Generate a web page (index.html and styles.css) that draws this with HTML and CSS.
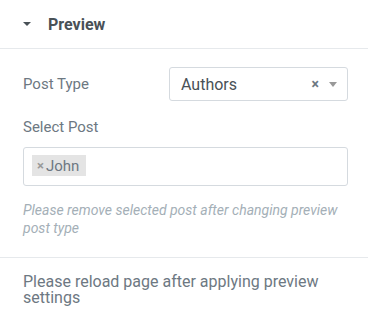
FILE: index.html
```html
<!DOCTYPE html>
<html lang="en">
<head>
  <meta charset="UTF-8" />
  <title>Preview Settings</title>
  <link rel="stylesheet" href="styles.css">
</head>
<body>
  <div class="panel">
    <div class="section-head">
      <span class="caret"></span>
      <span class="section-title">Preview</span>
    </div>

    <div class="section-body">
      <div class="control inline">
        <label class="control-label">Post Type</label>
        <div class="select">
          <span class="select-value">Authors</span>
          <span class="select-clear">×</span>
          <span class="select-arrow"></span>
        </div>
      </div>

      <div class="control">
        <label class="control-label">Select Post</label>
        <div class="multi">
          <span class="tag"><span class="tag-remove">×</span>John</span>
        </div>
        <div class="help">Please remove selected post after changing preview post type</div>
      </div>
    </div>

    <div class="note">Please reload page after applying preview settings</div>
  </div>
</body>
</html>
```

FILE: styles.css
```css
body {
  margin: 0;
  background-color: #ffffff;
  font-family: Roboto, "Liberation Sans", sans-serif;
  color: #6d7882;
}
.panel {
  width: 368px;
}
.section-head {
  display: flex;
  align-items: center;
  height: 48px;
  padding-left: 23px;
  border-bottom: 1px solid #e6e9ec;
}
.caret {
  width: 0;
  height: 0;
  border-left: 4px solid transparent;
  border-right: 4px solid transparent;
  border-top: 4px solid #495157;
  margin-right: 17px;
}
.section-title {
  font-size: 16px;
  font-weight: bold;
  color: #495157;
}
.section-body {
  padding: 18px 20px 20px 23px;
  border-bottom: 1px solid #e6e9ec;
}
.control-label {
  font-size: 15px;
  line-height: 18px;
}
.inline {
  display: flex;
  align-items: center;
  justify-content: space-between;
  margin-bottom: 16px;
}
.select {
  display: flex;
  align-items: center;
  box-sizing: border-box;
  width: 179px;
  height: 34px;
  padding: 0 10px 0 11px;
  border: 1px solid #d5dadf;
  border-radius: 3px;
}
.select-value {
  flex: 1;
  font-size: 16px;
  color: #495157;
}
.select-clear {
  font-size: 14px;
  font-weight: bold;
  color: #6d7882;
  margin-right: 10px;
}
.select-arrow {
  width: 0;
  height: 0;
  border-left: 4px solid transparent;
  border-right: 4px solid transparent;
  border-top: 5px solid #999999;
}
.multi {
  box-sizing: border-box;
  height: 39px;
  margin-top: 11px;
  padding: 7px 8px;
  border: 1px solid #d5dadf;
  border-radius: 3px;
}
.tag {
  display: inline-flex;
  align-items: center;
  height: 21px;
  padding: 0 7px 0 5px;
  background-color: #e4e4e4;
  font-size: 15px;
  color: #6d7882;
}
.tag-remove {
  font-size: 13px;
  font-weight: bold;
  color: #999999;
  margin-right: 2px;
}
.help {
  margin-top: 15px;
  font-size: 14px;
  line-height: 18px;
  font-style: italic;
  color: #a4afb7;
}
.note {
  padding: 16px 20px 0 23px;
  font-size: 16px;
  line-height: 16px;
}
```
